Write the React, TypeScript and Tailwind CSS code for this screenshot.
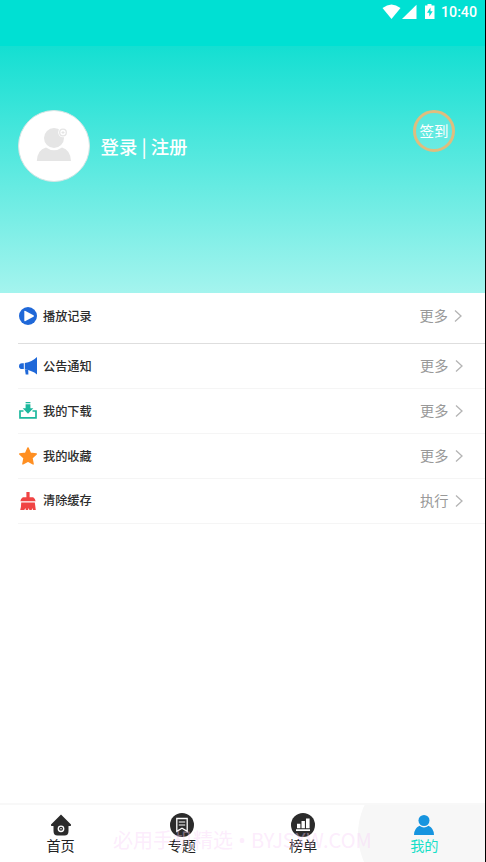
import type { ReactNode } from "react"

type Row = {
  label: string
  action: string
  icon: ReactNode
}

const PlayIcon = () => (
  <svg width="18" height="18" viewBox="0 0 18 18">
    <circle cx="9" cy="9" r="9" fill="#1f68d8" />
    <path d="M5.3 4.6Q5.3 3.4 6.5 4L14.5 8.2Q15.6 9 14.5 9.8L6.5 14Q5.3 14.6 5.3 13.4Z" fill="#fff" />
  </svg>
)

const HornIcon = () => (
  <svg width="18" height="18" viewBox="0 0 18 18" fill="#1f68d8">
    <path d="M18 0V17.5Q13 13.4 5.8 12.6V6Q13 5 18 0Z" />
    <path d="M4.8 6.3V12H3Q0 12 0 9.2Q0 6.3 3 6.3Z" />
    <path d="M6 12.8H9.2L9.4 17.5H6.7Z" />
  </svg>
)

const DownloadIcon = () => (
  <svg width="18" height="17" viewBox="0 0 18 17">
    <path d="M4.5 9H1V15.8H17V9H13.5" fill="none" stroke="#1cb89d" strokeWidth="1.7" />
    <path d="M6.6 0H11.4V1.2H6.6ZM6.6 2.2H11.4V6.2H14.3L9 11.8L3.7 6.2H6.6Z" fill="#1cb89d" />
  </svg>
)

const StarIcon = () => (
  <svg width="18" height="18" viewBox="0 0 18 18">
    <path
      d="M9 0.9L11.4 6.2L17.3 6.9L13 11.1L14.1 17L9 14.1L3.9 17L5 11.1L0.7 6.9L6.6 6.2Z"
      fill="#ff8f22"
      stroke="#ff8f22"
      strokeWidth="1.4"
      strokeLinejoin="round"
    />
  </svg>
)

const BroomIcon = () => (
  <svg width="18" height="18" viewBox="0 0 18 18" fill="#f04444">
    <path d="M7.4 0H10.6V5.2H14.2Q16.4 6.5 16.6 9.2H1.4Q1.6 6.5 3.8 5.2H7.4Z" />
    <path d="M2.2 10.6H15.8L16.8 18H14L13.3 16L12.7 18H10.4L9.7 16L9 18H6.8L6.4 16L5.3 18H1.2Q2.2 15 2.2 10.6Z" />
  </svg>
)

const rows: Row[] = [
  { label: "公告通知", action: "更多", icon: <HornIcon /> },
  { label: "我的下载", action: "更多", icon: <DownloadIcon /> },
  { label: "我的收藏", action: "更多", icon: <StarIcon /> },
  { label: "清除缓存", action: "执行", icon: <BroomIcon /> },
]

const Chevron = () => (
  <svg width="8" height="14" viewBox="0 0 8 14" fill="none" stroke="#b4b4b4" strokeWidth="1.3">
    <path d="M1 1.5L7 7L1 12.5" />
  </svg>
)

function RowContent({ label, action, icon }: Row) {
  return (
    <>
      <span className="ml-px flex w-[18px] justify-center">{icon}</span>
      <span className="ml-1.5 text-[12.2px] font-medium text-[#2c2c2c]">{label}</span>
      <span className="ml-auto mr-[6px] text-[14.2px] text-[#999]">{action}</span>
      <Chevron />
    </>
  )
}

function StatusBar() {
  return (
    <div className="flex h-[46px] items-start bg-[#00e0d3] pl-[382px] pt-1 text-white">
      <svg width="70" height="16" viewBox="0 0 70 16" fill="#fff" className="-mr-[10px] shrink-0">
        <path d="M0.5 4Q9.5-3 18.5 4L9.5 15Z" />
        <path d="M34.5 0.8V15H20Z" />
        <path
          fillRule="evenodd"
          d="M45.5 0H49.5V1.5H52.5V15H43V1.5H45.5ZM48.5 3.5L45 8.8H47.3V12.5L50.7 7.2H48.5Z"
        />
      </svg>
      <span className="-ml-px font-[Roboto] text-[14.2px] font-medium leading-4">10:40</span>
    </div>
  )
}

function Profile() {
  return (
    <div className="flex h-[247px] items-start bg-[linear-gradient(to_bottom,#14dfd2,#a4f4ee)] pl-[18px] pt-[64px] text-white">
      <div className="flex size-[72px] items-center justify-center rounded-full border-[1.5px] border-[#d5e5e4] bg-white">
        <svg width="36" height="36" viewBox="0 0 36 36" fill="#e5e5e5" className="-mt-1">
          <path d="M0.8 35Q1.2 24 10 21.5Q18 27 26 21.5Q34.5 24 35 35Z" />
          <circle cx="18" cy="12" r="10" />
          <circle cx="27" cy="6.5" r="4.8" fill="#fff" />
          <circle cx="27" cy="6.5" r="3.3" fill="none" stroke="#e5e5e5" strokeWidth="1.3" />
          <path d="M26.5 5H27.5V6H28.5V7H27.5V8H26.5V7H25.5V6H26.5Z" />
        </svg>
      </div>
      <div className="ml-[10.5px] mt-[23px] whitespace-nowrap text-[18.4px] font-medium leading-[26px]">
        登录 | 注册
      </div>
      <button className="ml-auto mr-[30px] flex size-[42px] items-center justify-center whitespace-nowrap rounded-full border-[3px] border-[#dfbd7e] bg-white/15 text-[14.5px]">
        签到
      </button>
    </div>
  )
}

const HomeIcon = () => (
  <svg width="22" height="22" viewBox="0 0 22 22">
    <path
      d="M11 0.5L21 10.5Q21.5 12 20 12H18.5V17Q18.5 21.5 14.5 21.5H7.5Q3.5 21.5 3.5 17V12H2Q0.5 12 1 10.5Z"
      fill="#2b2b2b"
    />
    <circle cx="11" cy="14.8" r="2.7" fill="#2b2b2b" stroke="#fff" strokeWidth="1.4" />
    <circle cx="11" cy="14.8" r="0.8" fill="#fff" />
  </svg>
)

const TopicIcon = () => (
  <svg width="24" height="24" viewBox="0 0 24 24">
    <circle cx="12" cy="12" r="12" fill="#2b2b2b" />
    <path d="M6.8 5.5H17.2V18.3L12 15.2L6.8 18.3Z" fill="none" stroke="#fff" strokeWidth="1.3" />
    <path d="M8.8 9H15.2M8.8 12H15.2" stroke="#fff" strokeWidth="1.2" />
  </svg>
)

const RankIcon = () => (
  <svg width="24" height="24" viewBox="0 0 24 24">
    <circle cx="12" cy="12" r="12" fill="#2b2b2b" />
    <path
      d="M6 10.8H9.4V15.2H6ZM10.5 8H13.9V15.2H10.5ZM15 5.5H18.6V15.2H15ZM5 16.3H19V18H5Z"
      fill="#fff"
    />
  </svg>
)

const UserIcon = () => (
  <svg width="20" height="20" viewBox="0 0 20 20" fill="#1694df">
    <circle cx="10" cy="5.5" r="5.5" />
    <path d="M0 20Q0 13.5 5.5 10.8Q10 14 14.5 10.8Q20 13.5 20 20Z" />
  </svg>
)

const tabs = [
  { label: "首页", icon: <HomeIcon /> },
  { label: "专题", icon: <TopicIcon /> },
  { label: "榜单", icon: <RankIcon /> },
  { label: "我的", icon: <UserIcon />, active: true },
]

function TabBar() {
  return (
    <nav className="relative grid h-[59px] grid-cols-4 overflow-hidden border-t-2 border-[#f8f8f8]">
      {/* pressed state of the last tab */}
      <div className="absolute -top-[38px] left-[358px] size-[134px] rounded-full bg-[#f7f7f7]" />
      {tabs.map((tab) => (
        <div key={tab.label} className="relative flex flex-col items-center pt-2">
          <span className="flex h-6 items-center">{tab.icon}</span>
          <span
            className={
              tab.active
                ? "-mt-px text-[14.2px] leading-[18px] text-[#16dfc8]"
                : "-mt-px text-[14.2px] leading-[18px] text-[#222]"
            }
          >
            {tab.label}
          </span>
        </div>
      ))}
      <div className="absolute left-[113px] top-[21px] whitespace-nowrap text-[20px] leading-[28px] text-[#f8d0f8]/40">
        必用手机精选<span className="font-['Noto_Sans']"> • </span>BYJSXW.COM
      </div>
    </nav>
  )
}

export default function App() {
  return (
    <div className="flex h-[862px] w-[486px] flex-col overflow-hidden border-r border-black bg-white font-['Noto_Sans_CJK_SC',sans-serif]">
      <StatusBar />
      <Profile />
      <main className="flex-1 pl-[18px]">
        <div className="flex h-[51px] items-center border-b border-[#dedede] pb-1 pr-[23px]">
          <RowContent label="播放记录" action="更多" icon={<PlayIcon />} />
        </div>
        {rows.map((row) => (
          <div key={row.label} className="flex h-[44.9px] items-center border-b border-[#f5f5f5] pr-[22.5px]">
            <RowContent {...row} />
          </div>
        ))}
      </main>
      <TabBar />
    </div>
  )
}
